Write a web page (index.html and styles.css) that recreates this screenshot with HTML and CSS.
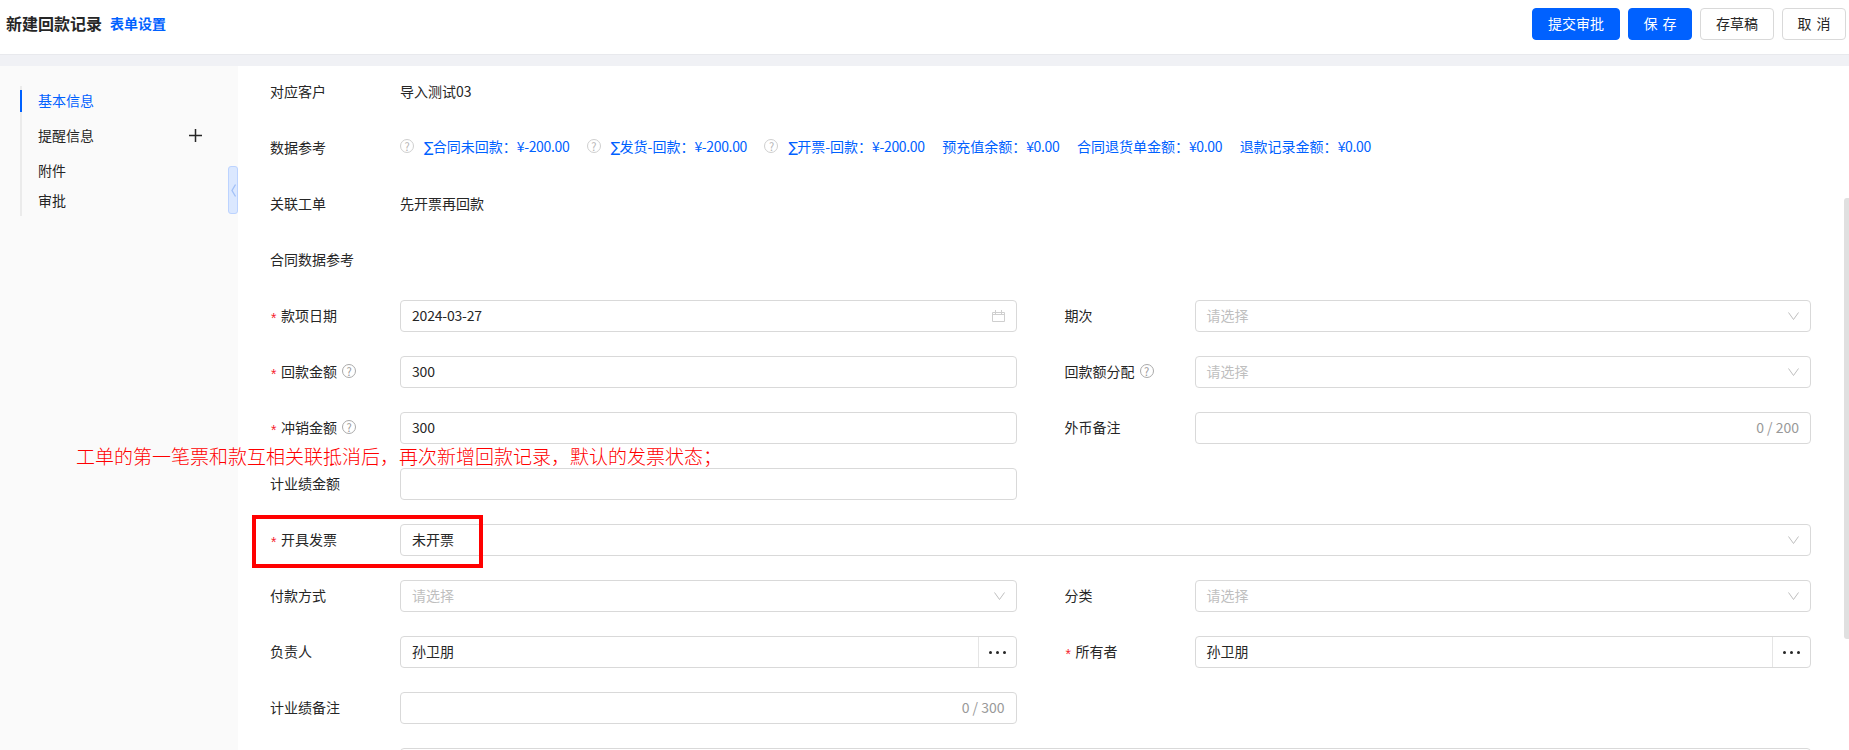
FILE: index.html
```html
<!DOCTYPE html>
<html>
<head>
	<meta charset="UTF-8" />
	<title>新建回款记录</title>
	<link rel="stylesheet" href="styles.css">
</head>
<body>

	<div id="page_head">
		<div class="head_title">
			<span class="title_text">新建回款记录</span>
			<a class="title_link">表单设置</a>
		</div>
		<div class="head_btns">
			<a class="btn btn_primary btn_submit">提交审批</a>
			<a class="btn btn_primary btn_save btn_spaced">保 存</a>
			<a class="btn btn_draft">存草稿</a>
			<a class="btn btn_cancel btn_spaced">取 消</a>
		</div>
	</div>

	<div id="page_body">
		<div id="side_nav">
			<ul class="nav_list">
				<li class="nav_item active">基本信息</li>
				<li class="nav_item nav_remind">提醒信息<svg class="nav_plus" width="13" height="13" viewBox="0 0 13 13"><path d="M6.5 0V13M0 6.5H13" stroke="#262626" stroke-width="1.5" fill="none"/></svg></li>
				<li class="nav_item nav_file">附件</li>
				<li class="nav_item nav_audit">审批</li>
			</ul>
			<div class="nav_toggle"><svg width="5" height="13" viewBox="0 0 5 13"><path d="M4.5 .5L1 6.5L4.5 12.5" stroke="#a3c1f7" stroke-width="1.3" fill="none"/></svg></div>
		</div>

		<div id="main">
			<form id="myForm">
				<div class="form_row">
					<div class="field_label">对应客户</div>
					<div class="field_text">导入测试03</div>
				</div>
				<div class="form_row">
					<div class="field_label">数据参考</div>
					<div class="ref_list">
						<span class="ref_item"><i class="tip_icon">?</i><span><b class="ref_sum">∑</b>合同未回款：<b class="ref_num">¥-200.00</b></span></span>
						<span class="ref_item"><i class="tip_icon">?</i><span><b class="ref_sum">∑</b>发货-回款：<b class="ref_num">¥-200.00</b></span></span>
						<span class="ref_item"><i class="tip_icon">?</i><span><b class="ref_sum">∑</b>开票-回款：<b class="ref_num">¥-200.00</b></span></span>
						<span class="ref_item"><span>预充值余额：<b class="ref_num">¥0.00</b></span></span>
						<span class="ref_item"><span>合同退货单金额：<b class="ref_num">¥0.00</b></span></span>
						<span class="ref_item"><span>退款记录金额：<b class="ref_num">¥0.00</b></span></span>
					</div>
				</div>
				<div class="form_row">
					<div class="field_label">关联工单</div>
					<div class="field_text">先开票再回款</div>
				</div>
				<div class="form_row">
					<div class="field_label wide_label">合同数据参考</div>
				</div>

				<div class="form_row">
					<div class="field_label"><em>*</em>款项日期</div>
					<div class="input_box"><span class="box_val box_num">2024-03-27</span>
						<svg class="cal_icon" width="13" height="12" viewBox="0 0 13 12"><path d="M.5 2.5H12.5V11.5H.5ZM.5 4.5H12.5M3.5 0V4M9.5 0V4" stroke="#cfcfcf" fill="none"/></svg>
					</div>
					<div class="field_label">期次</div>
					<div class="input_box"><span class="box_hold">请选择</span>
						<svg class="arrow_icon" width="11" height="8" viewBox="0 0 11 8"><path d="M.5 .5L5.5 7.5L10.5 .5" stroke="#bfbfbf" fill="none"/></svg>
					</div>
				</div>
				<div class="form_row">
					<div class="field_label"><em>*</em>回款金额<i class="tip_icon tip_after">?</i></div>
					<div class="input_box"><span class="box_val box_num">300</span></div>
					<div class="field_label">回款额分配<i class="tip_icon tip_after">?</i></div>
					<div class="input_box"><span class="box_hold">请选择</span>
						<svg class="arrow_icon" width="11" height="8" viewBox="0 0 11 8"><path d="M.5 .5L5.5 7.5L10.5 .5" stroke="#bfbfbf" fill="none"/></svg>
					</div>
				</div>
				<div class="form_row">
					<div class="field_label"><em>*</em>冲销金额<i class="tip_icon tip_after">?</i></div>
					<div class="input_box"><span class="box_val box_num">300</span></div>
					<div class="field_label">外币备注</div>
					<div class="input_box"><span class="box_count">0 / 200</span></div>
				</div>
				<div class="form_row">
					<div class="field_label">计业绩金额</div>
					<div class="input_box"></div>
				</div>
				<div class="form_row">
					<div class="field_label"><em>*</em>开具发票</div>
					<div class="input_box box_wide"><span class="box_val">未开票</span>
						<svg class="arrow_icon" width="11" height="8" viewBox="0 0 11 8"><path d="M.5 .5L5.5 7.5L10.5 .5" stroke="#bfbfbf" fill="none"/></svg>
					</div>
				</div>
				<div class="form_row">
					<div class="field_label">付款方式</div>
					<div class="input_box"><span class="box_hold">请选择</span>
						<svg class="arrow_icon" width="11" height="8" viewBox="0 0 11 8"><path d="M.5 .5L5.5 7.5L10.5 .5" stroke="#bfbfbf" fill="none"/></svg>
					</div>
					<div class="field_label">分类</div>
					<div class="input_box"><span class="box_hold">请选择</span>
						<svg class="arrow_icon" width="11" height="8" viewBox="0 0 11 8"><path d="M.5 .5L5.5 7.5L10.5 .5" stroke="#bfbfbf" fill="none"/></svg>
					</div>
				</div>
				<div class="form_row">
					<div class="field_label">负责人</div>
					<div class="input_box"><span class="box_val">孙卫朋</span><span class="box_more"><i></i><i></i><i></i></span></div>
					<div class="field_label"><em>*</em>所有者</div>
					<div class="input_box"><span class="box_val">孙卫朋</span><span class="box_more"><i></i><i></i><i></i></span></div>
				</div>
				<div class="form_row">
					<div class="field_label">计业绩备注</div>
					<div class="input_box"><span class="box_count">0 / 300</span></div>
				</div>
				<div class="form_row">
					<div class="field_label"></div>
					<div class="input_box box_wide box_tall"></div>
				</div>
			</form>
			<div class="scroll_bar"></div>
		</div>
	</div>

	<!-- 截图上的标注 -->
	<div class="note_text">工单的第一笔票和款互相关联抵消后，再次新增回款记录，默认的发票状态；</div>
	<div class="note_box"></div>

</body>
</html>
```
FILE: styles.css
```css
html, body{
    height: 100%;
}

body{
    margin: 0;
    overflow: hidden;
    background: #fff;
    color: #262626;
    font-family: "Noto Sans CJK SC", "Liberation Sans", sans-serif;
    font-size: 14px;
}

#page_head{
    display: flex;
    justify-content: space-between;
    align-items: center;
    height: 55px;
    padding: 0 3px 7px 6px;
    border-bottom: 1px solid #e8e9ed;
    box-sizing: border-box;
}

.head_title{
    display: flex;
    align-items: center;
    padding-bottom: 2px;
}

.title_text{
    font-size: 16px;
    font-weight: 700;
}

.title_link{
    margin-left: 8px;
    color: #0061ff;
    font-weight: 700;
}

.head_btns{
    display: flex;
    gap: 8px;
}

.btn{
    display: flex;
    justify-content: center;
    align-items: center;
    height: 32px;
    padding-bottom: 2px;
    box-sizing: border-box;
    border: 1px solid #d9d9d9;
    border-radius: 4px;
    background: #fff;
}

.btn_primary{
    border-color: #0061ff;
    background: #0061ff;
    color: #fff;
}

.btn_spaced{
    word-spacing: 2px;
}

.btn_submit{
    width: 88px;
}

.btn_save{
    width: 64px;
}

.btn_draft{
    width: 74px;
}

.btn_cancel{
    width: 64px;
}

#page_body{
    display: flex;
    height: 684px;
    border-top: 11px solid #f0f1f5;
}

#side_nav{
    position: relative;
    flex: 0 0 238px;
    box-sizing: border-box;
    padding-top: 20px;
    background: #fafafa;
}

.nav_list{
    box-sizing: border-box;
    width: 218px;
    height: 130px;
    margin: 0 0 0 20px;
    padding: 4px 0 0;
    list-style: none;
    border-left: 2px solid #ebebeb;
}

.nav_item{
    display: flex;
    justify-content: space-between;
    align-items: center;
    height: 22px;
    margin-left: -2px;
    padding: 0 36px 2px 16px;
    box-sizing: border-box;
    border-left: 2px solid transparent;
}

.nav_item.active{
    border-left-color: #0061ff;
    color: #0061ff;
}

.nav_remind{
    margin-top: 13px;
}

.nav_file{
    margin-top: 13px;
}

.nav_audit{
    margin-top: 8px;
}

.nav_toggle{
    position: absolute;
    top: 100px;
    right: 0;
    display: flex;
    justify-content: center;
    align-items: center;
    width: 10px;
    height: 48px;
    box-sizing: border-box;
    border: 1px solid #bcd3ff;
    border-radius: 3px;
    background: #dbe8ff;
}

#main{
    position: relative;
    flex: 1;
    overflow: hidden;
}

#myForm{
    margin-top: -2px;
    padding: 0 38px 0 32px;
}

.form_row{
    display: grid;
    grid-template-columns: 130px 1fr 48px 130px 1fr;
    align-items: center;
    height: 56px;
}

.form_row .field_label:nth-child(3){
    grid-column: 4;
}

.form_row .input_box:nth-child(4){
    grid-column: 5;
}

.field_label{
    display: flex;
    align-items: center;
    padding-bottom: 2px;
    white-space: nowrap;
}

.field_label em{
    margin-right: 4.6px;
    margin-left: 1px;
    padding-top: 6px;
    color: #f5222d;
    font-family: "Liberation Sans", sans-serif;
    font-style: normal;
    font-size: 14px;
    line-height: 14px;
}

.field_text{
    grid-column: 2 / -1;
    padding-bottom: 2px;
}

.ref_list{
    grid-column: 2 / -1;
    display: flex;
    gap: 17.5px;
    margin-top: -4px;
    color: #0061ff;
}

.ref_item{
    display: flex;
    align-items: center;
    white-space: nowrap;
}

.ref_item b{
    font-weight: 400;
}

.ref_sum{
    font-family: "DejaVu Sans", sans-serif;
    letter-spacing: -0.7px;
}

.ref_num{
    letter-spacing: -0.35px;
}

.tip_icon{
    display: inline-block;
    flex: none;
    width: 14px;
    height: 14px;
    margin-right: 10px;
    box-sizing: border-box;
    border: 1px solid #cfcfcf;
    border-radius: 50%;
    color: #b5b5b5;
    font-style: normal;
    font-size: 11px;
    line-height: 12px;
    text-align: center;
}

.tip_after{
    margin-left: 5px;
    margin-right: 0;
    color: #999;
    border-color: #aaa;
}

.input_box{
    display: flex;
    justify-content: space-between;
    align-items: center;
    height: 32px;
    padding: 0 11px;
    box-sizing: border-box;
    border: 1px solid #d9d9d9;
    border-radius: 4px;
    background: #fff;
}

.box_wide{
    grid-column: 2 / -1;
}

.box_tall{
    height: 60px;
    align-self: start;
    margin-top: 12px;
}

.box_val, .box_hold, .box_count{
    padding-bottom: 2px;
}

.box_num{
    letter-spacing: -0.2px;
}

.box_hold{
    color: #bfbfbf;
}

.box_count{
    margin-left: auto;
    color: #999;
}

.box_more{
    display: flex;
    justify-content: center;
    align-items: center;
    gap: 4px;
    align-self: stretch;
    width: 37px;
    margin-right: -11px;
    border-left: 1px solid #e5e5e5;
}

.box_more i{
    width: 3px;
    height: 3px;
    border-radius: 50%;
    background: #262626;
}

.scroll_bar{
    position: absolute;
    top: 132px;
    right: 0;
    width: 5px;
    height: 441px;
    border-radius: 3px 0 0 3px;
    background: #e0e0e0;
}

.note_text{
    position: absolute;
    top: 443px;
    left: 76px;
    color: #f00;
    font-size: 19px;
    font-weight: 300;
    line-height: 26px;
    white-space: nowrap;
}

.note_box{
    position: absolute;
    top: 515px;
    left: 252px;
    width: 231px;
    height: 53px;
    box-sizing: border-box;
    border: 4px solid #f00;
}
```
